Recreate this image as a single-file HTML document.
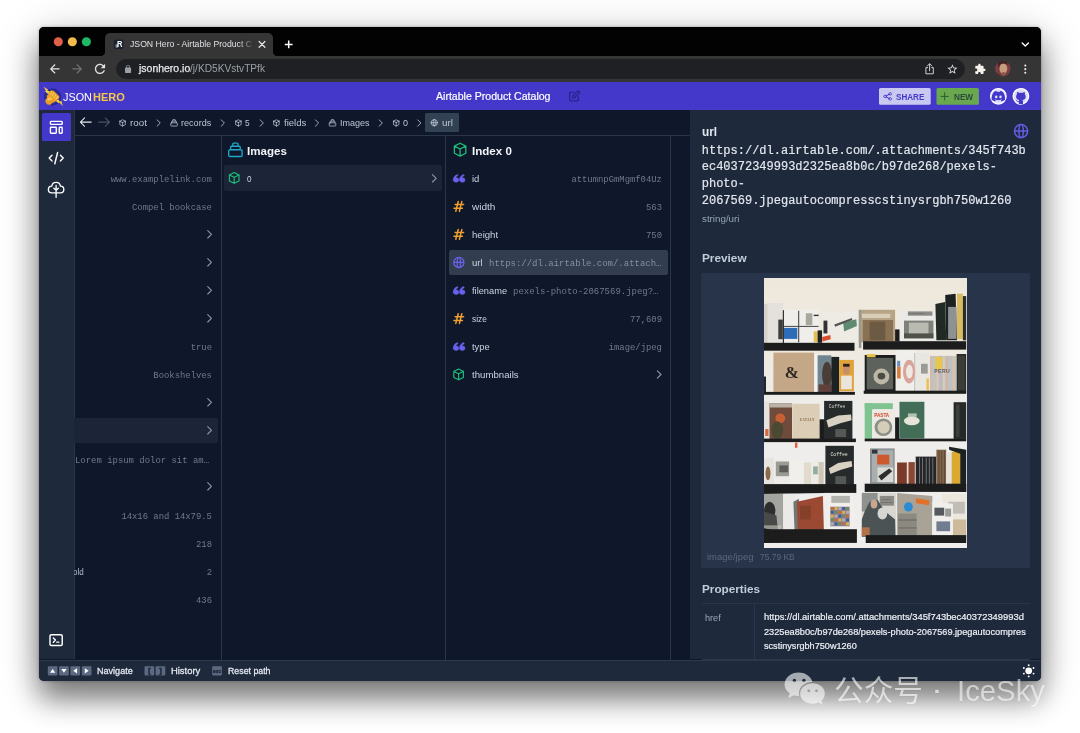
<!DOCTYPE html>
<html lang="en">
<head>
<meta charset="utf-8">
<title>JSON Hero - Airtable Product Catalog</title>
<style>
*{box-sizing:border-box;margin:0;padding:0}
html,body{width:1080px;height:733px;overflow:hidden;background:#fff}
body{position:relative;font-family:"Liberation Sans",sans-serif}
.abs,.win div,.win svg{position:absolute}
.t{position:absolute;white-space:nowrap;line-height:0;height:0;transform-origin:0 50%}
.s{font-family:"Liberation Sans",sans-serif}
.m{font-family:"Liberation Mono",monospace}
.c{font-family:"Liberation Sans","Noto Sans CJK SC",sans-serif}
.win{position:absolute;left:39px;top:27px;width:1002px;height:654px;border-radius:5px;background:#0f172a;
 box-shadow:0 18px 28px rgba(0,0,0,.46),0 6px 44px rgba(0,0,0,.2),0 0 3px rgba(0,0,0,.3)}
.clip{position:absolute;left:0;top:0;width:1002px;height:654px;border-radius:5px;overflow:hidden}
#lay{position:absolute;left:0;top:0;width:1080px;height:733px;will-change:transform}
#lay svg{position:absolute;overflow:visible}
</style>
</head>
<body>
<div class="win"><div class="clip">
 <!-- coordinates inside .clip are window-relative: page x-39, y-27 -->
 <div style="left:0;top:0;width:1002px;height:28.5px;background:#020202"></div>
 <div style="left:0;top:28.5px;width:1002px;height:26.5px;background:#353535"></div>
 <!-- tab -->
 <div style="left:66px;top:5.5px;width:168px;height:24px;background:#353535;border-radius:5px 5px 0 0"></div>
 <div style="left:61px;top:23.5px;width:5px;height:5px;background:radial-gradient(circle at 0 0,transparent 5px,#353535 5.5px)"></div>
 <div style="left:234px;top:23.5px;width:5px;height:5px;background:radial-gradient(circle at 100% 0,transparent 5px,#353535 5.5px)"></div>
 <!-- url pill -->
 <div style="left:77px;top:32px;width:848.5px;height:19.5px;border-radius:10px;background:#1f2023"></div>
 <!-- app header -->
 <div style="left:0;top:55px;width:1002px;height:28.3px;background:#4338ca"></div>
 <!-- sidebar -->
 <div style="left:0;top:83.3px;width:35px;height:549.2px;background:#1e293b"></div>
 <div style="left:3px;top:86px;width:28.5px;height:28px;background:#4338ca;border-radius:1.5px"></div>
 <div style="left:34.6px;top:83.3px;width:1px;height:549.2px;background:#283446"></div>
 <!-- breadcrumb bar border -->
 <div style="left:35px;top:107.6px;width:616px;height:1px;background:#2a3548"></div>
 <div style="left:386px;top:86.3px;width:33.8px;height:18.8px;background:#334155;border-radius:1.5px"></div>
 <!-- column borders -->
 <div style="left:181.7px;top:108.6px;width:1px;height:524px;background:#2a3548"></div>
 <div style="left:406.2px;top:108.6px;width:1px;height:524px;background:#2a3548"></div>
 <div style="left:631.2px;top:108.6px;width:1px;height:524px;background:#2a3548"></div>
 <!-- row highlights -->
 <div style="left:35px;top:391.4px;width:143.8px;height:25px;background:#1c2438;border-radius:0 2px 2px 0"></div>
 <div style="left:184.8px;top:138px;width:218.7px;height:25.5px;background:#1c2438;border-radius:2px"></div>
 <div style="left:410.2px;top:222.6px;width:218.4px;height:25.4px;background:#323d50;border-radius:2px"></div>
 <!-- right panel -->
 <div style="left:650.5px;top:83.3px;width:351.5px;height:549.2px;background:#1e293b"></div>
 <div style="left:662px;top:246px;width:328.5px;height:294.5px;background:#27344a;border-radius:1.5px"></div>
 <!-- properties table -->
 <div style="left:662.5px;top:576.1px;width:328px;height:1px;background:#2a374b"></div>
 <div style="left:715.3px;top:576.1px;width:1px;height:56.5px;background:#2a374b"></div>
 <div style="left:662.5px;top:631.9px;width:328px;height:1px;background:#2a374b"></div>
 <!-- footer -->
 <div style="left:0;top:632.7px;width:1002px;height:21.3px;background:#1e293b;border-top:1px solid #2c394e"></div>
</div></div>
<div id="lay">
<svg width="203" height="270" viewBox="0 0 203 270" style="left:764.3px;top:278.4px;overflow:hidden"><defs><linearGradient id="wall" x1="0" y1="0" x2="0" y2="1"><stop offset="0" stop-color="#eee8dc"/><stop offset="0.28" stop-color="#efeae1"/><stop offset="0.5" stop-color="#eeedeb"/><stop offset="1" stop-color="#efeeed"/></linearGradient><filter id="pb" x="-2%" y="-2%" width="104%" height="104%"><feGaussianBlur stdDeviation="0.6"/></filter></defs><rect width="203" height="270" fill="url(#wall)"/><g filter="url(#pb)"><rect x="2.6" y="24.9" width="16.7" height="40.2" fill="#e4e1dc"/><rect x="14.3" y="41.6" width="4.5" height="19.6" fill="#3c3d3c"/><rect x="0.0" y="25.9" width="3.5" height="39.3" fill="#d6d2cb"/><rect x="19.2" y="31.8" width="35.3" height="33.4" fill="#efeeeb"/><rect x="19.6" y="49.9" width="13.7" height="11.0" fill="#2d6cb8"/><rect x="18.8" y="32.2" width="1.2" height="33.0" fill="#333"/><rect x="34.2" y="32.8" width="1.0" height="31.4" fill="#3a3a3a"/><rect x="19.6" y="47.9" width="34.9" height="1.0" fill="#444"/><rect x="41.8" y="35.3" width="6.5" height="11.8" fill="#aaa79c"/><rect x="49.7" y="53.4" width="3.9" height="10.8" fill="#e3c04d"/><rect x="53.6" y="52.4" width="4.5" height="12.4" fill="#222"/><rect x="49.7" y="36.7" width="4.9" height="1.4" fill="#333"/><rect x="58.5" y="33.8" width="35.3" height="30.4" fill="#eeebe5"/><polygon points="58.1,58.9 66.4,56.9 66.7,61.2 58.5,63.6" fill="#d9502e"/><polygon points="79.1,44.6 92.3,41.2 92.9,47.9 80.1,53.4" fill="#5f8c70"/><polygon points="70.3,46.5 87.9,40.0 88.3,42.0 71.1,48.7" fill="#555"/><rect x="59.5" y="42.6" width="3.9" height="12.8" fill="#333"/><rect x="94.8" y="31.8" width="36.3" height="32.4" fill="#b7a486"/><rect x="97.8" y="35.7" width="28.5" height="4.3" fill="#d8cdb6"/><rect x="98.7" y="42.0" width="30.4" height="21.2" fill="#8a7152"/><rect x="105.6" y="43.6" width="15.7" height="18.6" fill="#6c5a44"/><rect x="94.8" y="31.8" width="2.6" height="38.3" fill="#9a9a92"/><rect x="131.1" y="51.4" width="4.9" height="12.2" fill="#1b1f1e"/><rect x="135.5" y="32.8" width="37.9" height="30.4" fill="#eceae6"/><rect x="140.0" y="42.6" width="29.4" height="17.7" fill="#7e817a"/><rect x="144.9" y="44.6" width="19.6" height="13.7" fill="#b9bab2"/><rect x="143.9" y="33.4" width="24.5" height="4.3" fill="#8a8a86"/><rect x="140.0" y="55.4" width="29.4" height="4.9" fill="#4f524c"/><polygon points="171.4,25.9 181.2,23.9 182.2,62.2 172.4,62.2" fill="#232927"/><polygon points="181.2,17.1 191.6,15.7 193.0,62.2 182.2,62.2" fill="#1d2221"/><rect x="184.1" y="28.9" width="8.4" height="32.0" fill="#8e9290"/><rect x="193.0" y="15.7" width="5.9" height="45.5" fill="#d8bb63"/><rect x="198.9" y="18.1" width="3.3" height="44.2" fill="#2a2d2a"/><rect x="0.0" y="64.8" width="90.5" height="7.9" fill="#1b1f1e"/><rect x="99.1" y="63.2" width="103.1" height="8.4" fill="#1b1f1e"/><rect x="0.0" y="98.5" width="2.0" height="15.7" fill="#23262b"/><rect x="9.4" y="74.6" width="40.8" height="39.7" fill="#c3a786"/><rect x="21.2" y="87.8" width="16.7" height="12.8" fill="#3a2f27" opacity="0.0"/><rect x="50.3" y="76.0" width="3.5" height="38.3" fill="#f3f2f0"/><rect x="53.6" y="77.3" width="13.7" height="36.9" fill="#6f858f"/><ellipse cx="63.0" cy="96.6" rx="4.9" ry="12.8" fill="#4a3d38"/><rect x="54.6" y="106.4" width="12.8" height="7.9" fill="#5e3f3a"/><rect x="67.3" y="78.9" width="7.9" height="35.3" fill="#1e2122"/><rect x="75.2" y="81.9" width="14.7" height="31.4" fill="#e0a23b"/><ellipse cx="82.5" cy="91.7" rx="3.4" ry="4.9" fill="#c98d6b"/><rect x="77.1" y="97.6" width="10.8" height="13.7" fill="#e9e4dc"/><rect x="79.1" y="85.8" width="6.5" height="2.9" fill="#2b2320"/><rect x="100.7" y="77.0" width="30.8" height="36.3" fill="#1b1c1c"/><rect x="102.7" y="79.9" width="26.5" height="31.4" fill="#5d625b"/><ellipse cx="117.4" cy="98.5" rx="7.9" ry="7.9" fill="#bdb8a6"/><ellipse cx="117.4" cy="98.1" rx="3.9" ry="3.4" fill="#4c4c44"/><rect x="102.7" y="76.0" width="8.8" height="3.3" fill="#e8c24a"/><rect x="132.1" y="72.0" width="18.6" height="41.2" fill="#f0efeb"/><rect x="150.8" y="75.0" width="14.9" height="38.3" fill="#e9e7e2"/><rect x="150.0" y="75.0" width="1.2" height="38.3" fill="#c9c7c1"/><ellipse cx="145.1" cy="93.6" rx="6.1" ry="11.8" fill="#d9a59b"/><ellipse cx="145.4" cy="93.6" rx="3.4" ry="6.9" fill="#efe9e2"/><rect x="133.1" y="88.7" width="3.5" height="11.8" fill="#d97b3a"/><rect x="133.1" y="82.8" width="3.1" height="5.9" fill="#6c8fc6"/><rect x="157.0" y="85.8" width="6.7" height="9.8" fill="#9a9a96"/><rect x="162.5" y="100.5" width="2.4" height="11.8" fill="#e8c24a"/><rect x="166.1" y="77.9" width="25.9" height="35.3" fill="#c9bfb9"/><rect x="166.1" y="77.9" width="1.8" height="35.3" fill="#d8b7ae"/><rect x="169.3" y="77.9" width="1.8" height="35.3" fill="#b7c9c6"/><rect x="172.6" y="77.9" width="1.8" height="35.3" fill="#d9cbb0"/><rect x="175.8" y="77.9" width="1.8" height="35.3" fill="#c0b3c6"/><rect x="179.0" y="77.9" width="1.8" height="35.3" fill="#cdd2b9"/><rect x="182.3" y="77.9" width="1.8" height="35.3" fill="#d7b3a6"/><rect x="185.5" y="77.9" width="1.8" height="35.3" fill="#b5c5cf"/><rect x="188.8" y="77.9" width="1.8" height="35.3" fill="#d8c7a8"/><rect x="171.0" y="78.9" width="7.3" height="12.2" fill="#e9c650"/><rect x="0.0" y="0.0" width="-4.3" height="-3.5" fill="none"/><rect x="192.6" y="76.0" width="9.6" height="37.3" fill="#2b2e2b"/><rect x="194.0" y="77.9" width="6.9" height="34.4" fill="#3a3d38"/><rect x="0.0" y="113.9" width="90.9" height="2.9" fill="#1b1f1e"/><rect x="99.7" y="112.7" width="102.5" height="3.1" fill="#1b1f1e"/><rect x="0.0" y="123.6" width="5.5" height="39.3" fill="#e6e2dd"/><rect x="1.2" y="151.1" width="3.3" height="6.9" fill="#d46a3a"/><rect x="5.5" y="125.2" width="22.6" height="38.7" fill="#6e4b3b"/><ellipse cx="16.3" cy="140.3" rx="4.9" ry="4.9" fill="#c65f33"/><ellipse cx="13.3" cy="152.1" rx="5.9" ry="8.8" fill="#4b4a32"/><rect x="5.5" y="125.2" width="22.6" height="4.3" fill="#b9b3a6"/><rect x="28.7" y="125.8" width="26.9" height="38.1" fill="#dccdb6"/><rect x="34.0" y="160.9" width="7.9" height="1.6" fill="#c45a3a"/><rect x="55.6" y="141.3" width="5.3" height="21.6" fill="#1b1f1e"/><rect x="60.1" y="122.9" width="28.3" height="38.1" fill="#272c2b"/><polygon points="62.4,142.3 74.2,137.4 87.0,136.4 87.6,142.3 76.2,145.2 64.4,149.6" fill="#d9d2c4"/><rect x="71.3" y="151.1" width="10.8" height="7.9" fill="#555956"/><rect x="0.0" y="131.5" width="-4.3" height="0.0" fill="none"/><rect x="100.7" y="125.2" width="8.4" height="35.7" fill="#7fc391"/><rect x="100.7" y="125.2" width="28.1" height="5.9" fill="#7fc391"/><rect x="108.0" y="131.5" width="23.2" height="29.8" fill="#ece9e3"/><ellipse cx="119.4" cy="149.2" rx="8.8" ry="8.8" fill="#8c8f86"/><ellipse cx="119.6" cy="149.2" rx="6.1" ry="6.3" fill="#d4cdb8"/><rect x="131.1" y="139.4" width="4.3" height="21.6" fill="#1b1f1e"/><rect x="135.5" y="123.8" width="25.1" height="36.7" fill="#436e58"/><ellipse cx="147.8" cy="142.8" rx="7.9" ry="4.4" fill="#e6e4da"/><rect x="143.9" y="135.4" width="8.8" height="3.5" fill="#dfe4dc" opacity="0.7"/><rect x="160.6" y="122.3" width="28.5" height="38.7" fill="#efefed"/><rect x="189.6" y="124.2" width="12.6" height="36.7" fill="#252926"/><rect x="192.0" y="126.6" width="3.5" height="32.4" fill="#3d413c"/><rect x="0.0" y="160.6" width="91.9" height="3.5" fill="#1b1f1e"/><rect x="100.7" y="160.6" width="101.5" height="2.7" fill="#1b1f1e"/><rect x="31.0" y="164.5" width="2.4" height="5.3" fill="#d9603a"/><polygon points="0.0,180.6 9.8,179.2 10.4,209.0 0.0,213.0" fill="#e7e4df"/><ellipse cx="4.0" cy="195.3" rx="2.5" ry="6.9" fill="#8a6a4a"/><rect x="10.4" y="181.6" width="17.7" height="27.5" fill="#eeece8"/><rect x="11.8" y="183.5" width="14.9" height="14.7" fill="#9a9b95"/><rect x="15.3" y="187.4" width="8.8" height="6.9" fill="#5c5d58"/><rect x="25.1" y="182.5" width="16.1" height="27.5" fill="#f1efeb"/><rect x="39.9" y="184.5" width="7.3" height="27.5" fill="#e2dbcd"/><rect x="47.1" y="182.9" width="7.5" height="29.4" fill="#eeebe4"/><rect x="54.6" y="184.1" width="5.1" height="27.9" fill="#cfc6b4"/><rect x="49.1" y="188.4" width="4.7" height="7.9" fill="#8fae9d"/><rect x="61.4" y="167.8" width="28.5" height="41.2" fill="#272c2b"/><polygon points="64.8,190.4 74.2,184.9 87.6,182.9 88.3,188.4 76.2,192.0 66.4,195.9" fill="#d9d2c4"/><rect x="71.3" y="198.2" width="10.8" height="8.8" fill="#555956"/><rect x="106.0" y="170.4" width="24.7" height="35.3" fill="#8c9292"/><rect x="108.0" y="172.3" width="21.2" height="31.8" fill="#a9aeae"/><rect x="113.1" y="176.7" width="12.2" height="9.8" fill="#cc5a2e"/><rect x="113.5" y="189.4" width="15.7" height="14.7" fill="#d9d9d5"/><polygon points="114.4,198.2 125.2,190.4 128.2,193.3 117.4,202.6" fill="#2e2e2e"/><rect x="108.0" y="171.7" width="5.5" height="3.9" fill="#30343a"/><rect x="133.1" y="184.5" width="9.8" height="27.5" fill="#7b3a2c"/><rect x="142.9" y="185.5" width="2.0" height="26.5" fill="#e4ded6"/><rect x="144.5" y="184.1" width="6.3" height="27.9" fill="#8a4632"/><rect x="151.7" y="178.6" width="20.6" height="33.4" fill="#25282a"/><rect x="155.1" y="179.6" width="0.8" height="31.4" fill="#7c8083"/><rect x="158.2" y="179.6" width="0.8" height="31.4" fill="#7c8083"/><rect x="161.8" y="179.6" width="0.8" height="31.4" fill="#7c8083"/><rect x="164.9" y="179.6" width="0.8" height="31.4" fill="#7c8083"/><rect x="168.4" y="179.6" width="0.8" height="31.4" fill="#7c8083"/><rect x="172.4" y="171.7" width="9.8" height="40.6" fill="#7d6349"/><rect x="174.7" y="172.7" width="0.6" height="39.3" fill="#4f3d2c"/><rect x="177.5" y="172.7" width="0.6" height="39.3" fill="#4f3d2c"/><rect x="180.2" y="172.7" width="0.6" height="39.3" fill="#4f3d2c"/><rect x="182.2" y="174.7" width="6.9" height="38.3" fill="#e6e3dd"/><rect x="187.7" y="173.7" width="9.2" height="40.2" fill="#dba830"/><polygon points="185.1,168.8 202.2,171.7 202.2,213.9 196.3,213.9 196.3,175.7 185.1,171.7" fill="#1e2122"/><rect x="0.0" y="206.1" width="92.3" height="8.8" fill="#1b1f1e"/><rect x="100.7" y="205.7" width="101.5" height="8.2" fill="#1b1f1e"/><polygon points="0.0,210.0 23.2,208.1 60.5,209.0 60.5,214.9 0.0,215.9" fill="#1b1f1e"/><rect x="0.0" y="215.9" width="19.2" height="39.7" fill="#a3a3a0"/><ellipse cx="5.7" cy="232.6" rx="5.7" ry="8.8" fill="#2f2f2f"/><polygon points="0.0,233.6 12.4,237.5 14.3,255.2 0.0,255.6" fill="#4a4a48"/><rect x="0.0" y="247.3" width="17.3" height="8.2" fill="#c9c6c0" opacity="0.6"/><rect x="19.2" y="215.9" width="11.4" height="37.3" fill="#eceae7"/><polygon points="29.4,223.8 34.9,220.8 35.9,263.0 31.0,263.4" fill="#6f7474"/><polygon points="33.0,223.8 58.9,217.9 60.1,260.1 34.0,264.0" fill="#9b4a30"/><rect x="35.9" y="227.7" width="10.8" height="13.7" fill="#7c3a26" opacity="0.7"/><rect x="63.4" y="215.5" width="26.1" height="37.7" fill="#f1efeb"/><rect x="66.4" y="228.7" width="19.2" height="19.6" fill="#8a8290"/><rect x="66.7" y="229.1" width="2.9" height="2.9" fill="#c96a3a"/><rect x="66.7" y="232.9" width="2.9" height="2.9" fill="#3e5f9a"/><rect x="66.7" y="236.7" width="2.9" height="2.9" fill="#d9b24a"/><rect x="66.7" y="240.5" width="2.9" height="2.9" fill="#6f8a5a"/><rect x="66.7" y="244.4" width="2.9" height="2.9" fill="#b9a9b9"/><rect x="70.6" y="229.1" width="2.9" height="2.9" fill="#d9b24a"/><rect x="70.6" y="232.9" width="2.9" height="2.9" fill="#6f8a5a"/><rect x="70.6" y="236.7" width="2.9" height="2.9" fill="#b9a9b9"/><rect x="70.6" y="240.5" width="2.9" height="2.9" fill="#c96a3a"/><rect x="70.6" y="244.4" width="2.9" height="2.9" fill="#3e5f9a"/><rect x="74.4" y="229.1" width="2.9" height="2.9" fill="#b9a9b9"/><rect x="74.4" y="232.9" width="2.9" height="2.9" fill="#c96a3a"/><rect x="74.4" y="236.7" width="2.9" height="2.9" fill="#3e5f9a"/><rect x="74.4" y="240.5" width="2.9" height="2.9" fill="#d9b24a"/><rect x="74.4" y="244.4" width="2.9" height="2.9" fill="#6f8a5a"/><rect x="78.2" y="229.1" width="2.9" height="2.9" fill="#3e5f9a"/><rect x="78.2" y="232.9" width="2.9" height="2.9" fill="#d9b24a"/><rect x="78.2" y="236.7" width="2.9" height="2.9" fill="#6f8a5a"/><rect x="78.2" y="240.5" width="2.9" height="2.9" fill="#b9a9b9"/><rect x="78.2" y="244.4" width="2.9" height="2.9" fill="#c96a3a"/><rect x="82.1" y="229.1" width="2.9" height="2.9" fill="#6f8a5a"/><rect x="82.1" y="232.9" width="2.9" height="2.9" fill="#b9a9b9"/><rect x="82.1" y="236.7" width="2.9" height="2.9" fill="#c96a3a"/><rect x="82.1" y="240.5" width="2.9" height="2.9" fill="#3e5f9a"/><rect x="82.1" y="244.4" width="2.9" height="2.9" fill="#d9b24a"/><rect x="67.3" y="217.9" width="18.6" height="6.9" fill="#8a8a86" opacity="0.6"/><rect x="97.8" y="214.9" width="34.4" height="43.8" fill="#d9d7d0"/><rect x="97.8" y="214.9" width="15.7" height="18.6" fill="#8e928f"/><polygon points="100.7,233.6 105.6,223.8 113.5,221.8 121.3,233.6 131.1,241.4 131.5,258.7 97.8,258.7 97.8,241.4" fill="#4b5254"/><ellipse cx="110.0" cy="226.0" rx="3.4" ry="4.6" fill="#c9a78f"/><ellipse cx="118.4" cy="235.5" rx="4.9" ry="5.9" fill="#d6d6d2"/><rect x="115.8" y="217.9" width="14.3" height="9.8" fill="#6a6a64" opacity="0.7"/><rect x="97.8" y="249.3" width="7.9" height="8.8" fill="#c97a4a" opacity="0.8"/><polygon points="133.1,214.9 168.4,217.9 168.0,262.6 133.1,261.1" fill="#a9a397"/><ellipse cx="144.4" cy="228.9" rx="4.4" ry="4.7" fill="#2a8bd3"/><polygon points="151.7,220.2 165.5,222.2 164.9,227.3 152.1,225.3" fill="#e0702c"/><rect x="134.1" y="235.5" width="18.6" height="26.5" fill="#8c8981"/><rect x="134.1" y="241.4" width="18.6" height="1.2" fill="#6e6b64"/><rect x="134.1" y="249.3" width="18.6" height="1.2" fill="#6e6b64"/><rect x="178.2" y="215.9" width="23.9" height="25.5" fill="#ece7dd"/><rect x="189.0" y="241.4" width="13.2" height="19.2" fill="#cdba9b"/><rect x="184.1" y="223.8" width="16.7" height="11.8" fill="#8a8a88" opacity="0.45"/><polygon points="168.4,223.8 189.0,225.7 188.5,259.5 168.4,256.2" fill="#f0efec"/><rect x="170.4" y="229.7" width="9.8" height="7.9" fill="#55585c"/><rect x="172.4" y="243.4" width="13.7" height="9.8" fill="#3c4a6a" opacity="0.7"/><rect x="181.2" y="230.6" width="5.9" height="7.9" fill="#9a9a96"/><rect x="0.0" y="251.2" width="92.9" height="13.7" fill="#1b1f1e"/><rect x="101.7" y="257.1" width="100.5" height="7.9" fill="#1b1f1e"/><polygon points="0.0,250.3 19.2,254.2 31.0,263.4 0.0,265.0" fill="#1b1f1e"/><text x="64.8" y="129.9" font-family="'Liberation Mono',monospace" font-size="4.6" font-weight="400" fill="#d5d8d2" text-anchor="start" letter-spacing="0">Coffee</text><text x="66.4" y="178.2" font-family="'Liberation Mono',monospace" font-size="4.8" font-weight="400" fill="#dfe2dc" text-anchor="start" letter-spacing="0">Coffee</text><text x="110.3" y="138.8" font-family="'Liberation Sans',sans-serif" font-size="4.6" font-weight="700" fill="#d4472c" text-anchor="start" letter-spacing="0">PASTA</text><text x="35.7" y="143.3" font-family="'Liberation Serif',serif" font-size="3.4" font-weight="700" fill="#8a6a45" text-anchor="start" letter-spacing="0.3">EATALY</text><text x="20.8" y="100.1" font-family="'Liberation Serif',serif" font-size="17" font-weight="700" fill="#2e2723" text-anchor="start" letter-spacing="0">&amp;</text><text x="170.2" y="94.6" font-family="'Liberation Sans',sans-serif" font-size="5.2" font-weight="700" fill="#5d5a57" text-anchor="start" letter-spacing="0.4">PERU</text><text x="117.0" y="222.2" font-family="'Liberation Serif',serif" font-size="2.8" font-weight="700" fill="#4a4a48" text-anchor="start" letter-spacing="0">CRAFT</text><text x="117.0" y="225.3" font-family="'Liberation Serif',serif" font-size="2.6" font-weight="700" fill="#4a4a48" text-anchor="start" letter-spacing="0">MAKERS</text><text x="144.5" y="36.3" font-family="'Liberation Serif',serif" font-size="2.6" font-weight="700" fill="#555" text-anchor="start" letter-spacing="0">EXPOSITION</text></g></svg>
<svg width="1080" height="733" viewBox="0 0 1080 733" style="left:0;top:0"><circle cx="58.3" cy="41.8" r="4.55" fill="#e0604b"/>
<circle cx="72.35" cy="41.8" r="4.55" fill="#f3bb4c"/>
<circle cx="86.4" cy="41.8" r="4.55" fill="#20b863"/>
<rect x="113.9" y="39.4" width="9.5" height="9.5" rx="1.6" fill="#1a2232"/>
<path d="M115.6 45.1h2.3M115.6 46.9h2.3" stroke="#fff" stroke-width="0.9"/>
<path d="M259.1 41.5l5.8 5.8M264.9 41.5l-5.8 5.8" stroke="#e4e4e4" stroke-width="1.25" stroke-linecap="round"/>
<path d="M284.8 44.4h7.8M288.7 40.5v7.8" stroke="#fff" stroke-width="1.5"/>
<path d="M1022.2 43.1l3.1 3 3.1-3" stroke="#fff" stroke-width="1.4" fill="none" stroke-linecap="round" stroke-linejoin="round"/>
<path transform="translate(47.50 61.70) scale(0.6)" d="M20 11H7.83l5.59-5.59L12 4l-8 8 8 8 1.41-1.41L7.83 13H20v-2z" fill="#e3e3e3"/>
<path transform="translate(70.05 61.70) scale(0.6)" d="M12 4l-1.41 1.41L16.17 11H4v2h12.17l-5.58 5.59L12 20l8-8z" fill="#727272"/>
<path transform="translate(92.32 61.22) scale(0.64)" d="M17.65 6.35C16.2 4.9 14.21 4 12 4c-4.42 0-7.99 3.58-7.99 8s3.57 8 7.99 8c3.73 0 6.84-2.55 7.73-6h-2.08c-.82 2.33-3.04 4-5.65 4-3.31 0-6-2.69-6-6s2.69-6 6-6c1.66 0 3.14.69 4.22 1.78L13 11h7V4l-2.35 2.35z" fill="#e3e3e3"/>
<path transform="translate(123.49 64.53) scale(0.38)" d="M18 8h-1V6c0-2.76-2.24-5-5-5S7 3.24 7 6v2H6c-1.1 0-2 .9-2 2v10c0 1.1.9 2 2 2h12c1.1 0 2-.9 2-2V10c0-1.1-.9-2-2-2zm-2.900 0H8.900V6c0-1.710 1.390-3.100 3.100-3.100 1.710 0 3.100 1.390 3.100 3.100v2z" fill="#9aa0a6"/>
<path d="M929.6 64v6.8M927.3 66l2.3-2.3 2.3 2.3M927.6 67.6h-1.7v6.200h7.400v-6.200h-1.700" stroke="#cfcfcf" stroke-width="1.0" fill="none" stroke-linejoin="round" stroke-linecap="round"/>
<path transform="translate(946.40 63.25) scale(0.5)" d="M22 9.24l-7.19-.62L12 2 9.19 8.63 2 9.24l5.46 4.73L5.82 21 12 17.27 18.18 21l-1.63-7.03L22 9.24zM12 15.4l-3.76 2.27 1-4.28-3.32-2.88 4.38-.38L12 6.1l1.71 4.04 4.38.38-3.32 2.88 1 4.28L12 15.4z" fill="#e3e3e3"/>
<path transform="translate(974.27 63.27) scale(0.49)" d="M20.5 11H19V7c0-1.1-.9-2-2-2h-4V3.5C13 2.12 11.88 1 10.5 1S8 2.12 8 3.5V5H4c-1.1 0-1.99.9-1.99 2v3.8H3.5c1.49 0 2.7 1.21 2.7 2.7s-1.21 2.7-2.7 2.7H2V20c0 1.1.9 2 2 2h3.8v-1.5c0-1.49 1.21-2.7 2.7-2.7 1.49 0 2.7 1.21 2.7 2.7V22H17c1.1 0 2-.9 2-2v-4h1.5c1.38 0 2.5-1.12 2.5-2.5S21.88 11 20.5 11z" fill="#f5f2ea"/>
<clipPath id="av"><circle cx="1002.8" cy="68.8" r="7.7"/></clipPath><g clip-path="url(#av)"><rect x="995" y="61" width="16" height="16" fill="#7a3d42"/><ellipse cx="1003.4" cy="68.6" rx="3.9" ry="5" fill="#c69d7c"/><path d="M998 62c2-2 7-2 9 0l.5 3c-2-1.500-5-1.800-7.500-.8l-1.500 4z" fill="#3a2420"/><path d="M997 72.500c1.500 1.500 3 3 5.500 3.800l-1 1.500h-6z" fill="#4a2f28"/><ellipse cx="1003.600" cy="73.800" rx="2.200" ry="1.700" fill="#8a5c48"/></g>
<circle cx="1025.3" cy="65.6" r="1.05" fill="#e8eaed"/>
<circle cx="1025.3" cy="69.15" r="1.05" fill="#e8eaed"/>
<circle cx="1025.3" cy="72.7" r="1.05" fill="#e8eaed"/>
<g transform="translate(40 84) scale(0.03549)"><circle cx="352" cy="368" r="240" fill="#24258a"/><circle cx="352" cy="368" r="222" fill="#2a2c9a"/><polygon points="100,75 230,165 205,182 300,215 250,300 140,205 168,192" fill="#f6cf3c"/><polygon points="642,622 600,470 562,500 520,440 430,470 530,545 548,522" fill="#f6cf3c"/><path d="M300 192 L365 185 L425 232 L485 288 L542 352 L536 402 L482 452 L420 502 L332 540 L282 590 L200 572 L150 500 L156 440 L200 400 L190 330 L240 288 L262 222Z" fill="#eea22c" stroke="#b97a1c" stroke-width="10" stroke-linejoin="round"/><path d="M330 215 L300 290 M385 250 L345 330 M440 300 L400 380 M495 355 L445 430" stroke="#f9cd5a" stroke-width="34" stroke-linecap="round"/><path d="M355 235 L320 315 M410 278 L372 358 M466 330 L425 405" stroke="#c4831f" stroke-width="9" stroke-linecap="round"/><path d="M215 400 C260 360 330 380 350 430 C300 470 250 480 200 455Z" fill="#f7c450"/><path d="M190 470 C250 500 330 490 400 440 M200 520 C250 540 300 530 350 500" stroke="#c4831f" stroke-width="9" fill="none" stroke-linecap="round"/></g>
<path transform="translate(567.33 89.24) scale(0.58)" d="M11 5H6a2 2 0 00-2 2v11a2 2 0 002 2h11a2 2 0 002-2v-5m-1.414-9.414a2 2 0 112.828 2.828L11.828 15H9v-2.828l8.586-8.586z" fill="none" stroke="#29248f" stroke-width="2.33" stroke-linecap="round" stroke-linejoin="round"/>
<rect x="879" y="88.100" width="51.700" height="16.700" rx="1.500" fill="#c9c8f1"/><rect x="936.500" y="88.100" width="42.400" height="16.700" rx="1.500" fill="#6aa84f"/>
<path transform="translate(882.56 91.36) scale(0.42)" d="M8.684 13.342C8.886 12.938 9 12.482 9 12c0-.482-.114-.938-.316-1.342m0 2.684a3 3 0 110-2.684m0 2.684l6.632 3.316m-6.632-6l6.632-3.316m0 0a3 3 0 105.367-2.684 3 3 0 00-5.367 2.684zm0 9.316a3 3 0 105.368 2.684 3 3 0 00-5.368-2.684z" fill="none" stroke="#4338ca" stroke-width="2.38" stroke-linecap="round" stroke-linejoin="round"/>
<path transform="translate(939.30 91.00) scale(0.45)" d="M12 4v16m8-8H4" fill="none" stroke="#2a5a34" stroke-width="2.22" stroke-linecap="round" stroke-linejoin="round"/>
<circle cx="998.350" cy="96.300" r="7.750" fill="#dddbf9" stroke="#fff" stroke-width="1.3"/>
<g transform="translate(998.35 96.5) scale(1.28) translate(-998.35 -96.7)"><path d="M994.600 93.300c1-.5 1.900-.8 2.300-.8l.3.600c.800-.1 1.500-.1 2.300 0l.3-.6c.4 0 1.300.3 2.300.8 1.100 1.700 1.700 3.800 1.500 6-.9.700-1.800 1.100-2.700 1.300l-.6-1c.3-.1.700-.3 1-.5l-.2-.2c-1.900.9-3.700.9-5.500 0l-.2.200c.3.200.7.4 1 .5l-.6 1c-.9-.2-1.800-.6-2.700-1.300-.2-2.200.4-4.300 1.500-6z" fill="#4338ca"/><ellipse cx="996.700" cy="97" rx="0.950" ry="1.100" fill="#e4e3fb"/><ellipse cx="1000" cy="97" rx="0.950" ry="1.100" fill="#e4e3fb"/></g>
<circle cx="1020.900" cy="96.300" r="7.750" fill="#dddbf9" stroke="#fff" stroke-width="1.3"/>
<path d="M1018.800 104v-2.200c-1.800.4-2.300-.8-2.700-1.300-.2-.3-.5-.5-.8-.7.900-.1 1.300.6 1.700 1 .5.500 1.200.6 1.800.3.100-.5.300-.9.600-1.100-2-.3-3.300-1.300-3.300-3.500 0-.9.300-1.700.9-2.300-.2-.7-.1-1.500.2-2.100.8 0 1.500.4 2.100.9.900-.2 2.300-.2 3.200 0 .6-.5 1.300-.9 2.100-.9.300.6.400 1.400.2 2.100.6.600.9 1.400.9 2.300 0 2.200-1.300 3.200-3.300 3.500.4.400.6 1 .6 1.700v2.300z" fill="#4338ca"/>
<path transform="translate(47.48 118.48) scale(0.735)" d="M4 5a1 1 0 011-1h14a1 1 0 011 1v2a1 1 0 01-1 1H5a1 1 0 01-1-1V5zM4 13a1 1 0 011-1h6a1 1 0 011 1v6a1 1 0 01-1 1H5a1 1 0 01-1-1v-6zM16 13a1 1 0 011-1h2a1 1 0 011 1v6a1 1 0 01-1 1h-2a1 1 0 01-1-1v-6z" fill="none" stroke="#ffffff" stroke-width="1.90" stroke-linecap="round" stroke-linejoin="round"/>
<path transform="translate(47.80 149.70) scale(0.7)" d="M10 20l4-16m4 4l4 4-4 4M6 16l-4-4 4-4" fill="none" stroke="#ffffff" stroke-width="2.07" stroke-linecap="round" stroke-linejoin="round"/>
<path transform="translate(46.50 179.60) scale(0.8)" d="M6.5 16.6A4.2 4.2 0 016.6 8.2 5.45 5.45 0 0117.4 8.2 4.2 4.2 0 0117.5 16.6zM12 22V7.3M12 13.4L9.2 10.9M12 13.4l2.8-2.5" fill="none" stroke="#ffffff" stroke-width="1.69" stroke-linecap="round" stroke-linejoin="round"/>
<path transform="translate(47.94 631.94) scale(0.68)" d="M8 9l3 3-3 3m5 0h3M5 20h14a2 2 0 002-2V6a2 2 0 00-2-2H5a2 2 0 00-2 2v12a2 2 0 002 2z" fill="none" stroke="#ffffff" stroke-width="2.13" stroke-linecap="round" stroke-linejoin="round"/>
<path transform="translate(78.60 114.90) scale(0.6)" d="M10 19l-7-7m0 0l7-7m-7 7h18" fill="none" stroke="#e6eaf0" stroke-width="1.75" stroke-linecap="round" stroke-linejoin="round"/>
<path transform="translate(96.85 114.90) scale(0.6)" d="M14 5l7 7m0 0l-7 7m7-7H3" fill="none" stroke="#4a566c" stroke-width="1.75" stroke-linecap="round" stroke-linejoin="round"/>
<path transform="translate(118.46 118.76) scale(0.345)" d="M20 7l-8-4-8 4m16 0l-8 4m8-4v10l-8 4m0-10L4 7m8 4v10M4 7v10l8 4" fill="none" stroke="#bcc5d3" stroke-width="2.17" stroke-linecap="round" stroke-linejoin="round"/>
<path transform="translate(234.26 118.76) scale(0.345)" d="M20 7l-8-4-8 4m16 0l-8 4m8-4v10l-8 4m0-10L4 7m8 4v10M4 7v10l8 4" fill="none" stroke="#bcc5d3" stroke-width="2.17" stroke-linecap="round" stroke-linejoin="round"/>
<path transform="translate(272.26 118.76) scale(0.345)" d="M20 7l-8-4-8 4m16 0l-8 4m8-4v10l-8 4m0-10L4 7m8 4v10M4 7v10l8 4" fill="none" stroke="#bcc5d3" stroke-width="2.17" stroke-linecap="round" stroke-linejoin="round"/>
<path transform="translate(392.06 118.76) scale(0.345)" d="M20 7l-8-4-8 4m16 0l-8 4m8-4v10l-8 4m0-10L4 7m8 4v10M4 7v10l8 4" fill="none" stroke="#bcc5d3" stroke-width="2.17" stroke-linecap="round" stroke-linejoin="round"/>
<path transform="translate(170.33 119.08) scale(0.31)" d="M3.5 12h17a2 2 0 012 2v6.5a2 2 0 01-2 2h-17a2 2 0 01-2-2V14a2 2 0 012-2zM4.5 12V8a1.5 1.5 0 011.5-1.5h12A1.5 1.5 0 0119.5 8v4M8 6.5V3a1.5 1.5 0 011.5-1.5h5A1.5 1.5 0 0116 3v3.5" fill="none" stroke="#bcc5d3" stroke-width="2.42" stroke-linecap="round" stroke-linejoin="round"/>
<path transform="translate(328.78 119.08) scale(0.31)" d="M3.5 12h17a2 2 0 012 2v6.5a2 2 0 01-2 2h-17a2 2 0 01-2-2V14a2 2 0 012-2zM4.5 12V8a1.5 1.5 0 011.5-1.5h12A1.5 1.5 0 0119.5 8v4M8 6.5V3a1.5 1.5 0 011.5-1.5h5A1.5 1.5 0 0116 3v3.5" fill="none" stroke="#bcc5d3" stroke-width="2.42" stroke-linecap="round" stroke-linejoin="round"/>
<path transform="translate(429.98 118.38) scale(0.36)" d="M21 12a9 9 0 01-9 9m9-9a9 9 0 00-9-9m9 9H3m9 9a9 9 0 01-9-9m9 9c1.657 0 3-4.03 3-9s-1.343-9-3-9m0 18c-1.657 0-3-4.03-3-9s1.343-9 3-9m-9 9a9 9 0 019-9" fill="none" stroke="#bcc5d3" stroke-width="2.22" stroke-linecap="round" stroke-linejoin="round"/>
<path transform="translate(153.07 117.60) scale(0.45)" d="M9 5l7 7-7 7" fill="none" stroke="#aab4c4" stroke-width="2.11" stroke-linecap="round" stroke-linejoin="round"/>
<path transform="translate(217.18 117.60) scale(0.45)" d="M9 5l7 7-7 7" fill="none" stroke="#aab4c4" stroke-width="2.11" stroke-linecap="round" stroke-linejoin="round"/>
<path transform="translate(256.12 117.60) scale(0.45)" d="M9 5l7 7-7 7" fill="none" stroke="#aab4c4" stroke-width="2.11" stroke-linecap="round" stroke-linejoin="round"/>
<path transform="translate(311.38 117.60) scale(0.45)" d="M9 5l7 7-7 7" fill="none" stroke="#aab4c4" stroke-width="2.11" stroke-linecap="round" stroke-linejoin="round"/>
<path transform="translate(375.12 117.60) scale(0.45)" d="M9 5l7 7-7 7" fill="none" stroke="#aab4c4" stroke-width="2.11" stroke-linecap="round" stroke-linejoin="round"/>
<path transform="translate(413.62 117.60) scale(0.45)" d="M9 5l7 7-7 7" fill="none" stroke="#aab4c4" stroke-width="2.11" stroke-linecap="round" stroke-linejoin="round"/>
<path transform="translate(202.97 227.94) scale(0.53)" d="M9 5l7 7-7 7" fill="none" stroke="#8a95a9" stroke-width="2.17" stroke-linecap="round" stroke-linejoin="round"/>
<path transform="translate(202.97 255.94) scale(0.53)" d="M9 5l7 7-7 7" fill="none" stroke="#8a95a9" stroke-width="2.17" stroke-linecap="round" stroke-linejoin="round"/>
<path transform="translate(202.97 283.94) scale(0.53)" d="M9 5l7 7-7 7" fill="none" stroke="#8a95a9" stroke-width="2.17" stroke-linecap="round" stroke-linejoin="round"/>
<path transform="translate(202.97 311.94) scale(0.53)" d="M9 5l7 7-7 7" fill="none" stroke="#8a95a9" stroke-width="2.17" stroke-linecap="round" stroke-linejoin="round"/>
<path transform="translate(202.97 395.94) scale(0.53)" d="M9 5l7 7-7 7" fill="none" stroke="#8a95a9" stroke-width="2.17" stroke-linecap="round" stroke-linejoin="round"/>
<path transform="translate(202.97 423.94) scale(0.53)" d="M9 5l7 7-7 7" fill="none" stroke="#8a95a9" stroke-width="2.17" stroke-linecap="round" stroke-linejoin="round"/>
<path transform="translate(202.97 479.94) scale(0.53)" d="M9 5l7 7-7 7" fill="none" stroke="#8a95a9" stroke-width="2.17" stroke-linecap="round" stroke-linejoin="round"/>
<path transform="translate(427.68 171.94) scale(0.53)" d="M9 5l7 7-7 7" fill="none" stroke="#8a95a9" stroke-width="2.17" stroke-linecap="round" stroke-linejoin="round"/>
<path transform="translate(652.58 368.14) scale(0.53)" d="M9 5l7 7-7 7" fill="none" stroke="#8a95a9" stroke-width="2.17" stroke-linecap="round" stroke-linejoin="round"/>
<path transform="translate(227.72 142.12) scale(0.64)" d="M3.5 12h17a2 2 0 012 2v6.5a2 2 0 01-2 2h-17a2 2 0 01-2-2V14a2 2 0 012-2zM4.5 12V8a1.5 1.5 0 011.5-1.5h12A1.5 1.5 0 0119.5 8v4M8 6.5V3a1.5 1.5 0 011.5-1.5h5A1.5 1.5 0 0116 3v3.5" fill="none" stroke="#1fa6c8" stroke-width="2.11" stroke-linecap="round" stroke-linejoin="round"/>
<path transform="translate(227.00 170.70) scale(0.6)" d="M20 7l-8-4-8 4m16 0l-8 4m8-4v10l-8 4m0-10L4 7m8 4v10M4 7v10l8 4" fill="none" stroke="#1fbd78" stroke-width="1.92" stroke-linecap="round" stroke-linejoin="round"/>
<path transform="translate(451.52 141.12) scale(0.715)" d="M20 7l-8-4-8 4m16 0l-8 4m8-4v10l-8 4m0-10L4 7m8 4v10M4 7v10l8 4" fill="none" stroke="#1fbd78" stroke-width="1.82" stroke-linecap="round" stroke-linejoin="round"/>
<path transform="translate(452.08 171.45) scale(0.54)" d="M2 16.5c0-5.5 3-9.5 8.2-11l.9 2.2c-2.6 1-3.9 2.6-4.2 4.3.4-.2.9-.3 1.5-.3 2.3 0 4 1.7 4 4.1 0 2.400-1.900 4.200-4.400 4.200C4.500 20 2 18.500 2 16.500zM13.500 16.500c0-5.500 3-9.500 8.200-11l.9 2.200c-2.600 1-3.900 2.600-4.200 4.300.4-.2.9-.3 1.500-.3 2.300 0 4 1.700 4 4.100 0 2.400-1.900 4.200-4.400 4.200-3.500 0-6-1.500-6-3.500z" fill="#6a62ee" stroke="#6a62ee" stroke-width="0.9"/>
<path transform="translate(451.60 199.20) scale(0.6)" d="M7 20l4-16m2 16l4-16M6 9h14M4 15h14" fill="none" stroke="#f0a030" stroke-width="2.50" stroke-linecap="round" stroke-linejoin="round"/>
<path transform="translate(451.60 227.20) scale(0.6)" d="M7 20l4-16m2 16l4-16M6 9h14M4 15h14" fill="none" stroke="#f0a030" stroke-width="2.50" stroke-linecap="round" stroke-linejoin="round"/>
<path transform="translate(452.07 255.67) scale(0.565)" d="M21 12a9 9 0 01-9 9m9-9a9 9 0 00-9-9m9 9H3m9 9a9 9 0 01-9-9m9 9c1.657 0 3-4.03 3-9s-1.343-9-3-9m0 18c-1.657 0-3-4.03-3-9s1.343-9 3-9m-9 9a9 9 0 019-9" fill="none" stroke="#6a62ee" stroke-width="2.21" stroke-linecap="round" stroke-linejoin="round"/>
<path transform="translate(452.08 283.65) scale(0.54)" d="M2 16.5c0-5.5 3-9.5 8.2-11l.9 2.2c-2.6 1-3.9 2.6-4.2 4.3.4-.2.9-.3 1.5-.3 2.3 0 4 1.7 4 4.1 0 2.400-1.900 4.200-4.400 4.200C4.500 20 2 18.500 2 16.500zM13.500 16.500c0-5.500 3-9.500 8.200-11l.9 2.200c-2.600 1-3.900 2.600-4.200 4.300.4-.2.9-.3 1.500-.3 2.300 0 4 1.700 4 4.100 0 2.400-1.900 4.200-4.400 4.200-3.500 0-6-1.500-6-3.500z" fill="#6a62ee" stroke="#6a62ee" stroke-width="0.9"/>
<path transform="translate(451.60 311.40) scale(0.6)" d="M7 20l4-16m2 16l4-16M6 9h14M4 15h14" fill="none" stroke="#f0a030" stroke-width="2.50" stroke-linecap="round" stroke-linejoin="round"/>
<path transform="translate(452.08 339.65) scale(0.54)" d="M2 16.5c0-5.5 3-9.5 8.2-11l.9 2.2c-2.6 1-3.9 2.6-4.2 4.3.4-.2.9-.3 1.5-.3 2.3 0 4 1.7 4 4.1 0 2.400-1.900 4.200-4.400 4.200C4.500 20 2 18.500 2 16.500zM13.500 16.500c0-5.500 3-9.500 8.200-11l.9 2.200c-2.600 1-3.900 2.600-4.200 4.300.4-.2.9-.3 1.500-.3 2.300 0 4 1.700 4 4.100 0 2.400-1.900 4.200-4.400 4.200-3.500 0-6-1.500-6-3.500z" fill="#6a62ee" stroke="#6a62ee" stroke-width="0.9"/>
<path transform="translate(451.40 367.20) scale(0.6)" d="M20 7l-8-4-8 4m16 0l-8 4m8-4v10l-8 4m0-10L4 7m8 4v10M4 7v10l8 4" fill="none" stroke="#1fbd78" stroke-width="1.92" stroke-linecap="round" stroke-linejoin="round"/>
<path transform="translate(1012.28 122.28) scale(0.735)" d="M21 12a9 9 0 01-9 9m9-9a9 9 0 00-9-9m9 9H3m9 9a9 9 0 01-9-9m9 9c1.657 0 3-4.03 3-9s-1.343-9-3-9m0 18c-1.657 0-3-4.03-3-9s1.343-9 3-9m-9 9a9 9 0 019-9" fill="none" stroke="#645ce6" stroke-width="2.04" stroke-linecap="round" stroke-linejoin="round"/>
<rect x="47.8" y="666.200" width="9.700" height="9.200" rx="0.800" fill="#5c6981"/>
<rect x="59.1" y="666.200" width="9.700" height="9.200" rx="0.800" fill="#5c6981"/>
<rect x="70.4" y="666.200" width="9.700" height="9.200" rx="0.800" fill="#5c6981"/>
<rect x="81.8" y="666.200" width="9.700" height="9.200" rx="0.800" fill="#5c6981"/>
<path d="M50.000 672.800l2.650-3.900 2.650 3.900zM61.300 668.900l2.650 3.900 2.650-3.900zM77.100 668.200l-3.900 2.650 3.900 2.650zM84.800 668.200l3.900 2.650-3.900 2.650z" fill="#fff"/>
<rect x="144.5" y="666.200" width="9.700" height="9.200" rx="0.800" fill="#5c6981"/>
<rect x="155.6" y="666.200" width="9.700" height="9.200" rx="0.800" fill="#5c6981"/>
<rect x="212.2" y="666.200" width="9.700" height="9.200" rx="0.800" fill="#5c6981"/>
<circle cx="1028.700" cy="670.800" r="3.400" fill="#fff"/>
<circle cx="1028.70" cy="665.20" r="0.950" fill="#fff"/>
<circle cx="1023.85" cy="668.00" r="0.950" fill="#fff"/>
<circle cx="1023.85" cy="673.60" r="0.950" fill="#fff"/>
<circle cx="1028.70" cy="676.40" r="0.950" fill="#fff"/>
<circle cx="1033.55" cy="673.60" r="0.950" fill="#fff"/>
<circle cx="1033.55" cy="668.00" r="0.950" fill="#fff"/>
<defs><mask id="wm1" maskUnits="userSpaceOnUse" x="770" y="660" width="70" height="60"><rect x="770" y="660" width="70" height="60" fill="#fff"/><ellipse cx="812.500" cy="693.500" rx="13.600" ry="11.600" fill="#000"/><circle cx="794.400" cy="680.500" r="1.700" fill="#000"/><circle cx="803.900" cy="680.500" r="1.700" fill="#000"/></mask><mask id="wm2" maskUnits="userSpaceOnUse" x="770" y="660" width="70" height="60"><rect x="770" y="660" width="70" height="60" fill="#fff"/><circle cx="808.800" cy="690.800" r="1.400" fill="#000"/><circle cx="816.500" cy="690.800" r="1.400" fill="#000"/></mask></defs>
<g fill="#fff" opacity="0.600"><g mask="url(#wm1)"><ellipse cx="798.600" cy="684.200" rx="14" ry="11.700"/><path d="M790 693l-1.800 5 6-2.800z"/></g><g mask="url(#wm2)"><ellipse cx="812.500" cy="693.500" rx="12.300" ry="10.300"/><path d="M818 702l4.500 3-1-5z"/></g></g></svg>
<div class="t s" style="left:130.00px;top:43.78px;font-size:9.5px;color:#dfe1e5;transform:scaleX(0.9133);">JSON Hero - Airtable Product C</div>
<div class="t s" style="left:116.90px;top:44.40px;font-size:8.4px;color:#ffffff;font-weight:700;transform:scaleX(0.9072);">R</div>
<div class="t s" style="left:138.75px;top:68.36px;font-size:10.9px;color:#e8eaed;transform:scaleX(0.9619);-webkit-text-stroke:0.25px #e8eaed;">jsonhero.io</div>
<div class="t s" style="left:190.00px;top:68.36px;font-size:10.9px;color:#9aa0a6;transform:scaleX(0.9317);">/j/KD5KVstvTPfk</div>
<div class="t s" style="left:63.25px;top:97.33px;font-size:10.9px;color:#ffffff;transform:scaleX(0.9967);">JSON</div>
<div class="t s" style="left:92.90px;top:97.33px;font-size:10.9px;color:#f5c945;font-weight:700;transform:scaleX(1.0137);">HERO</div>
<div class="t s" style="left:436.25px;top:96.33px;font-size:11.2px;color:#ffffff;transform:scaleX(0.9442);-webkit-text-stroke:0.2px #fff;">Airtable Product Catalog</div>
<div class="t s" style="left:896.40px;top:96.60px;font-size:9.0px;color:#4338ca;font-weight:700;transform:scaleX(0.9011);">SHARE</div>
<div class="t s" style="left:953.90px;top:96.60px;font-size:9.0px;color:#2b4a3c;font-weight:700;transform:scaleX(0.9095);">NEW</div>
<div class="t s" style="left:130.00px;top:122.74px;font-size:9.9px;color:#bcc5d3;transform:scaleX(0.9923);">root</div>
<div class="t s" style="left:181.00px;top:122.74px;font-size:9.9px;color:#bcc5d3;transform:scaleX(0.9184);">records</div>
<div class="t s" style="left:245.40px;top:122.74px;font-size:9.9px;color:#bcc5d3;transform:scaleX(0.8364);">5</div>
<div class="t s" style="left:283.75px;top:122.74px;font-size:9.9px;color:#bcc5d3;transform:scaleX(0.9648);">fields</div>
<div class="t s" style="left:340.00px;top:122.74px;font-size:9.9px;color:#bcc5d3;transform:scaleX(0.9108);">Images</div>
<div class="t s" style="left:403.00px;top:122.74px;font-size:9.9px;color:#bcc5d3;transform:scaleX(0.9091);">0</div>
<div class="t s" style="left:442.00px;top:122.74px;font-size:9.9px;color:#bcc5d3;">url</div>
<div class="t m" style="left:110.73px;top:179.90px;font-size:8.9px;color:#6e7a8e;">www.examplelink.com</div>
<div class="t m" style="left:132.05px;top:207.90px;font-size:8.9px;color:#6e7a8e;">Compel bookcase</div>
<div class="t m" style="left:190.68px;top:347.90px;font-size:8.9px;color:#6e7a8e;">true</div>
<div class="t m" style="left:153.37px;top:375.90px;font-size:8.9px;color:#6e7a8e;">Bookshelves</div>
<div class="t m" style="left:75.00px;top:461.20px;font-size:8.9px;color:#6e7a8e;transform:scaleX(1.0063);">Lorem ipsum dolor sit am…</div>
<div class="t m" style="left:121.39px;top:517.20px;font-size:8.9px;color:#6e7a8e;">14x16 and 14x79.5</div>
<div class="t m" style="left:196.01px;top:545.20px;font-size:8.9px;color:#6e7a8e;">218</div>
<div class="t m" style="left:206.67px;top:572.50px;font-size:8.9px;color:#6e7a8e;">2</div>
<div class="t m" style="left:196.01px;top:601.20px;font-size:8.9px;color:#6e7a8e;">436</div>
<div class="t s" style="left:72.70px;top:571.59px;font-size:9.9px;color:#b4bfcd;transform:scaleX(0.8114);">old</div>
<div class="t s" style="left:246.90px;top:151.20px;font-size:11.6px;color:#f1f5f9;font-weight:700;transform:scaleX(0.9970);">Images</div>
<div class="t s" style="left:246.75px;top:179.01px;font-size:9.9px;color:#cbd5e1;transform:scaleX(0.8182);">0</div>
<div class="t s" style="left:471.90px;top:151.40px;font-size:11.6px;color:#f1f5f9;font-weight:700;transform:scaleX(0.9974);">Index 0</div>
<div class="t s" style="left:471.90px;top:178.89px;font-size:9.9px;color:#cbd5e1;transform:scaleX(0.9561);">id</div>
<div class="t s" style="left:471.90px;top:206.89px;font-size:9.9px;color:#cbd5e1;transform:scaleX(1.0125);">width</div>
<div class="t s" style="left:471.90px;top:234.89px;font-size:9.9px;color:#cbd5e1;transform:scaleX(0.9700);">height</div>
<div class="t s" style="left:471.90px;top:262.89px;font-size:9.9px;color:#cbd5e1;transform:scaleX(0.9650);">url</div>
<div class="t s" style="left:471.90px;top:290.89px;font-size:9.9px;color:#cbd5e1;transform:scaleX(0.9403);">filename</div>
<div class="t s" style="left:471.90px;top:318.89px;font-size:9.9px;color:#cbd5e1;transform:scaleX(0.8456);">size</div>
<div class="t s" style="left:471.90px;top:346.89px;font-size:9.9px;color:#cbd5e1;transform:scaleX(0.9426);">type</div>
<div class="t s" style="left:471.90px;top:374.89px;font-size:9.9px;color:#cbd5e1;transform:scaleX(0.9756);">thumbnails</div>
<div class="t m" style="left:571.39px;top:179.90px;font-size:8.9px;color:#6e7a8e;">attumnpGmMgmf04Uz</div>
<div class="t m" style="left:646.01px;top:207.90px;font-size:8.9px;color:#6e7a8e;">563</div>
<div class="t m" style="left:646.01px;top:235.90px;font-size:8.9px;color:#6e7a8e;">750</div>
<div class="t m" style="left:488.75px;top:263.90px;font-size:8.9px;color:#8490a3;transform:scaleX(1.0121);">https://dl.airtable.com/.attach…</div>
<div class="t m" style="left:513.25px;top:291.90px;font-size:8.9px;color:#6e7a8e;transform:scaleX(1.0117);">pexels-photo-2067569.jpeg?…</div>
<div class="t m" style="left:630.02px;top:319.90px;font-size:8.9px;color:#6e7a8e;">77,609</div>
<div class="t m" style="left:608.70px;top:347.90px;font-size:8.9px;color:#6e7a8e;">image/jpeg</div>
<div class="t s" style="left:701.90px;top:131.76px;font-size:12px;color:#e2e8f0;font-weight:700;transform:scaleX(0.9841);">url</div>
<div class="t m" style="left:701.75px;top:150.80px;font-size:12px;color:#e3e8ef;-webkit-text-stroke:0.18px #e3e8ef;">https://dl.airtable.com/.attachments/345f743b</div>
<div class="t m" style="left:701.75px;top:167.45px;font-size:12px;color:#e3e8ef;-webkit-text-stroke:0.18px #e3e8ef;">ec40372349993d2325ea8b0c/b97de268/pexels-</div>
<div class="t m" style="left:701.75px;top:184.10px;font-size:12px;color:#e3e8ef;-webkit-text-stroke:0.18px #e3e8ef;">photo-</div>
<div class="t m" style="left:701.75px;top:200.75px;font-size:12px;color:#e3e8ef;-webkit-text-stroke:0.18px #e3e8ef;">2067569.jpegautocompresscstinysrgbh750w1260</div>
<div class="t s" style="left:701.75px;top:218.77px;font-size:9.6px;color:#94a3b8;transform:scaleX(1.0191);">string/uri</div>
<div class="t s" style="left:701.90px;top:257.88px;font-size:11.8px;color:#c3ccd9;font-weight:700;transform:scaleX(0.9942);">Preview</div>
<div class="t s" style="left:706.75px;top:557.24px;font-size:9.9px;color:#5a687f;transform:scaleX(0.9625);">image/jpeg</div>
<div class="t s" style="left:759.50px;top:557.24px;font-size:9.9px;color:#5a687f;transform:scaleX(0.8551);">75.79 KB</div>
<div class="t s" style="left:701.90px;top:588.78px;font-size:11.8px;color:#c3ccd9;font-weight:700;transform:scaleX(0.9956);">Properties</div>
<div class="t s" style="left:705.00px;top:617.74px;font-size:9.9px;color:#9ca9ba;transform:scaleX(0.9248);">href</div>
<div class="t s" style="left:763.75px;top:617.14px;font-size:9.9px;color:#eef2f7;transform:scaleX(0.9508);-webkit-text-stroke:0.2px #eef2f7;">https://dl.airtable.com/.attachments/345f743bec40372349993d</div>
<div class="t s" style="left:763.75px;top:631.74px;font-size:9.9px;color:#eef2f7;transform:scaleX(0.9329);-webkit-text-stroke:0.2px #eef2f7;">2325ea8b0c/b97de268/pexels-photo-2067569.jpegautocompres</div>
<div class="t s" style="left:763.75px;top:646.14px;font-size:9.9px;color:#eef2f7;transform:scaleX(0.9232);-webkit-text-stroke:0.2px #eef2f7;">scstinysrgbh750w1260</div>
<div class="t s" style="left:97.00px;top:671.04px;font-size:9.9px;color:#e2e8f0;transform:scaleX(0.9170);-webkit-text-stroke:0.3px #e2e8f0;">Navigate</div>
<div class="t s" style="left:171.25px;top:671.04px;font-size:9.9px;color:#e2e8f0;transform:scaleX(0.9517);-webkit-text-stroke:0.3px #e2e8f0;">History</div>
<div class="t s" style="left:227.50px;top:671.04px;font-size:9.9px;color:#e2e8f0;transform:scaleX(0.8898);-webkit-text-stroke:0.3px #e2e8f0;">Reset path</div>
<div class="t s" style="left:147.90px;top:670.89px;font-size:8px;color:#1e293b;font-weight:700;transform:scaleX(1.0854);-webkit-text-stroke:0.4px #1e293b;">[</div>
<div class="t s" style="left:159.00px;top:670.89px;font-size:8px;color:#1e293b;font-weight:700;transform:scaleX(1.0854);-webkit-text-stroke:0.4px #1e293b;">]</div>
<div class="t s" style="left:213.00px;top:670.50px;font-size:5.8px;color:#1e293b;font-weight:700;transform:scaleX(0.8375);-webkit-text-stroke:0.3px #1e293b;">esc</div>
<div class="t c" style="left:834.00px;top:690.84px;font-size:29.5px;color:#ffffff;transform:scaleX(1.0055);opacity:0.62;text-shadow:0 0 1.5px rgba(0,0,0,.18);">公众号</div>
<div class="t c" style="left:931.30px;top:688.64px;font-size:29.5px;color:#ffffff;transform:scaleX(1.2210);opacity:0.62;text-shadow:0 0 1.5px rgba(0,0,0,.18);">·</div>
<div class="t c" style="left:957.00px;top:690.84px;font-size:29.5px;color:#ffffff;transform:scaleX(0.9940);opacity:0.56;text-shadow:0 0 1.5px rgba(0,0,0,.18);">IceSky</div>
<div style="position:absolute;left:68px;top:563px;width:6px;height:20px;background:#1e293b"></div>
<div style="position:absolute;left:238px;top:38px;width:16px;height:13px;background:linear-gradient(90deg,rgba(53,53,53,0),rgba(53,53,53,.9))"></div>
</div>
</body>
</html>
